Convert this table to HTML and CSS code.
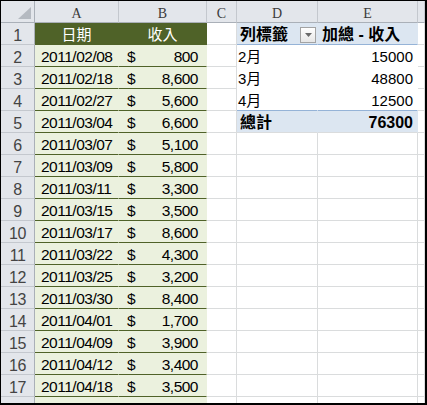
FILE: index.html
```html
<!DOCTYPE html>
<html>
<head>
<meta charset="utf-8">
<link rel="stylesheet" href="styles.css">
</head>
<body>
<div class="frame">
<div class="sheet">
  <div class="c hd corner"><svg width="13" height="12" viewBox="0 0 13 12"><polygon points="13,0 13,12 0,12" fill="#b5bac1"/></svg></div>
  <div class="c hd ch">A</div>
  <div class="c hd ch">B</div>
  <div class="c hd ch">C</div>
  <div class="c hd ch">D</div>
  <div class="c hd ch">E</div>
  <div class="c hd ch"></div>

  <div class="c hd rh">1</div>
  <div class="c th">日期</div>
  <div class="c th">收入</div>
  <div class="c"></div>
  <div class="c pv pvh pl"><span class="b">列標籤</span><span class="dd"><svg width="7" height="4" viewBox="0 0 7 4"><polygon points="0,0 7,0 3.5,4" fill="#6a6a6a"/></svg></span></div>
  <div class="c pv pvh pe"><span class="b">加總 - 收入</span></div>
  <div class="c"></div>

  <div class="c hd rh">2</div>
  <div class="c td da">2011/02/08</div>
  <div class="c td db"><span>$</span><span>800</span></div>
  <div class="c"></div>
  <div class="c pw pl">2月</div>
  <div class="c pw pr">15000</div>
  <div class="c"></div>

  <div class="c hd rh">3</div>
  <div class="c td da">2011/02/18</div>
  <div class="c td db"><span>$</span><span>8,600</span></div>
  <div class="c"></div>
  <div class="c pw pl">3月</div>
  <div class="c pw pr">48800</div>
  <div class="c"></div>

  <div class="c hd rh">4</div>
  <div class="c td da">2011/02/27</div>
  <div class="c td db"><span>$</span><span>5,600</span></div>
  <div class="c"></div>
  <div class="c pw pl plast">4月</div>
  <div class="c pw pr plast">12500</div>
  <div class="c"></div>

  <div class="c hd rh">5</div>
  <div class="c td da">2011/03/04</div>
  <div class="c td db"><span>$</span><span>6,600</span></div>
  <div class="c"></div>
  <div class="c pv pt pl"><span class="b">總計</span></div>
  <div class="c pv pt pr"><span class="b">76300</span></div>
  <div class="c"></div>

  <div class="c hd rh">6</div>
  <div class="c td da">2011/03/07</div>
  <div class="c td db"><span>$</span><span>5,100</span></div>
  <div class="c"></div><div class="c"></div><div class="c"></div><div class="c"></div>

  <div class="c hd rh">7</div>
  <div class="c td da">2011/03/09</div>
  <div class="c td db"><span>$</span><span>5,800</span></div>
  <div class="c"></div><div class="c"></div><div class="c"></div><div class="c"></div>

  <div class="c hd rh">8</div>
  <div class="c td da">2011/03/11</div>
  <div class="c td db"><span>$</span><span>3,300</span></div>
  <div class="c"></div><div class="c"></div><div class="c"></div><div class="c"></div>

  <div class="c hd rh">9</div>
  <div class="c td da">2011/03/15</div>
  <div class="c td db"><span>$</span><span>3,500</span></div>
  <div class="c"></div><div class="c"></div><div class="c"></div><div class="c"></div>

  <div class="c hd rh">10</div>
  <div class="c td da">2011/03/17</div>
  <div class="c td db"><span>$</span><span>8,600</span></div>
  <div class="c"></div><div class="c"></div><div class="c"></div><div class="c"></div>

  <div class="c hd rh">11</div>
  <div class="c td da">2011/03/22</div>
  <div class="c td db"><span>$</span><span>4,300</span></div>
  <div class="c"></div><div class="c"></div><div class="c"></div><div class="c"></div>

  <div class="c hd rh">12</div>
  <div class="c td da">2011/03/25</div>
  <div class="c td db"><span>$</span><span>3,200</span></div>
  <div class="c"></div><div class="c"></div><div class="c"></div><div class="c"></div>

  <div class="c hd rh">13</div>
  <div class="c td da">2011/03/30</div>
  <div class="c td db"><span>$</span><span>8,400</span></div>
  <div class="c"></div><div class="c"></div><div class="c"></div><div class="c"></div>

  <div class="c hd rh">14</div>
  <div class="c td da">2011/04/01</div>
  <div class="c td db"><span>$</span><span>1,700</span></div>
  <div class="c"></div><div class="c"></div><div class="c"></div><div class="c"></div>

  <div class="c hd rh">15</div>
  <div class="c td da">2011/04/09</div>
  <div class="c td db"><span>$</span><span>3,900</span></div>
  <div class="c"></div><div class="c"></div><div class="c"></div><div class="c"></div>

  <div class="c hd rh">16</div>
  <div class="c td da">2011/04/12</div>
  <div class="c td db"><span>$</span><span>3,400</span></div>
  <div class="c"></div><div class="c"></div><div class="c"></div><div class="c"></div>

  <div class="c hd rh">17</div>
  <div class="c td da">2011/04/18</div>
  <div class="c td db"><span>$</span><span>3,500</span></div>
  <div class="c"></div><div class="c"></div><div class="c"></div><div class="c"></div>

  <div class="c hd rh">18</div>
  <div class="c td da"></div>
  <div class="c td db"></div>
  <div class="c"></div><div class="c"></div><div class="c"></div><div class="c"></div>
</div>
</div>
</body>
</html>
```

FILE: styles.css
```css
html, body {
  margin: 0;
  padding: 0;
  background: #fff;
}

.frame {
  width: 427px;
  height: 405px;
  box-sizing: border-box;
  border-style: solid;
  border-color: #000;
  border-width: 1px 2px 2px 1px;
  overflow: hidden;
  background: #fff;
}

.sheet {
  display: grid;
  grid-template-columns: 34px 84px 88px 30px 81px 100px 7px;
  grid-auto-rows: 22px;
}

.c {
  box-sizing: border-box;
  border-right: 1px solid #dadcdd;
  border-bottom: 1px solid #dadcdd;
  font-family: "Liberation Sans", "Noto Sans CJK TC", sans-serif;
  font-size: 15px;
  line-height: 17px;
  padding-top: 3px;
  color: #000;
  white-space: nowrap;
  overflow: hidden;
}

/* headers */
.hd {
  background: #e3e6eb;
  border-right-color: #c4c8ce;
  border-bottom-color: #c4c8ce;
  color: #3b3b3b;
  text-align: center;
}

.ch {
  border-bottom-color: #aab0b8;
  font-family: "Liberation Serif", serif;
  font-size: 14px;
  padding-top: 4px;
}

.rh {
  border-right-color: #aab0b8;
  font-size: 16px;
  letter-spacing: -0.5px;
  color: #444;
  padding-top: 4px;
}

.corner {
  display: flex;
  justify-content: flex-end;
  align-items: flex-end;
  padding: 0 3px 3px 0;
  border-bottom-color: #aab0b8;
  border-right-color: #aab0b8;
}

.corner svg {
  display: block;
}

/* data table */
.th {
  background: #4f6228;
  border-right-color: #4f6228;
  border-bottom-color: #4f6228;
  color: #fff;
  text-align: center;
  font-family: "Noto Sans CJK TC", sans-serif;
  font-size: 15px;
  line-height: 17px;
  padding-top: 2px;
}

.td {
  background: #ebf1de;
  border-right-color: #ebf1de;
  border-bottom-color: #4f6228;
  font-size: 15.5px;
  letter-spacing: -0.5px;
}

.da {
  padding-left: 6px;
}

.db {
  display: flex;
  justify-content: space-between;
  padding-left: 8px;
  padding-right: 8px;
}

/* pivot table */
.pv {
  background: #dce6f1;
  border-right-color: #dce6f1;
}

.pvh {
  border-bottom-color: #95b3d7;
  display: flex;
  align-items: flex-start;
  padding-top: 3px;
}

.pvh.pl {
  justify-content: space-between;
  padding-left: 3px;
  padding-right: 1px;
}

.pvh.pe {
  padding-left: 4px;
}

.b {
  font-weight: bold;
  font-size: 16px;
}

.pw {
  border-right-color: #fff;
  border-bottom-color: #fff;
}

.pl {
  padding-left: 1px;
}

.pr {
  text-align: right;
  padding-right: 4px;
}

.plast {
  border-bottom-color: #95b3d7;
}

.pt.pl {
  padding-left: 3px;
  padding-top: 3px;
}

.pt.pr {
  padding-top: 3px;
}

.dd {
  box-sizing: border-box;
  width: 16px;
  height: 16px;
  margin-top: 1px;
  border: 1px solid #a3a3a3;
  background: linear-gradient(#ffffff, #e6e6e6);
  display: flex;
  align-items: center;
  justify-content: center;
}

.dd svg {
  display: block;
}
```
